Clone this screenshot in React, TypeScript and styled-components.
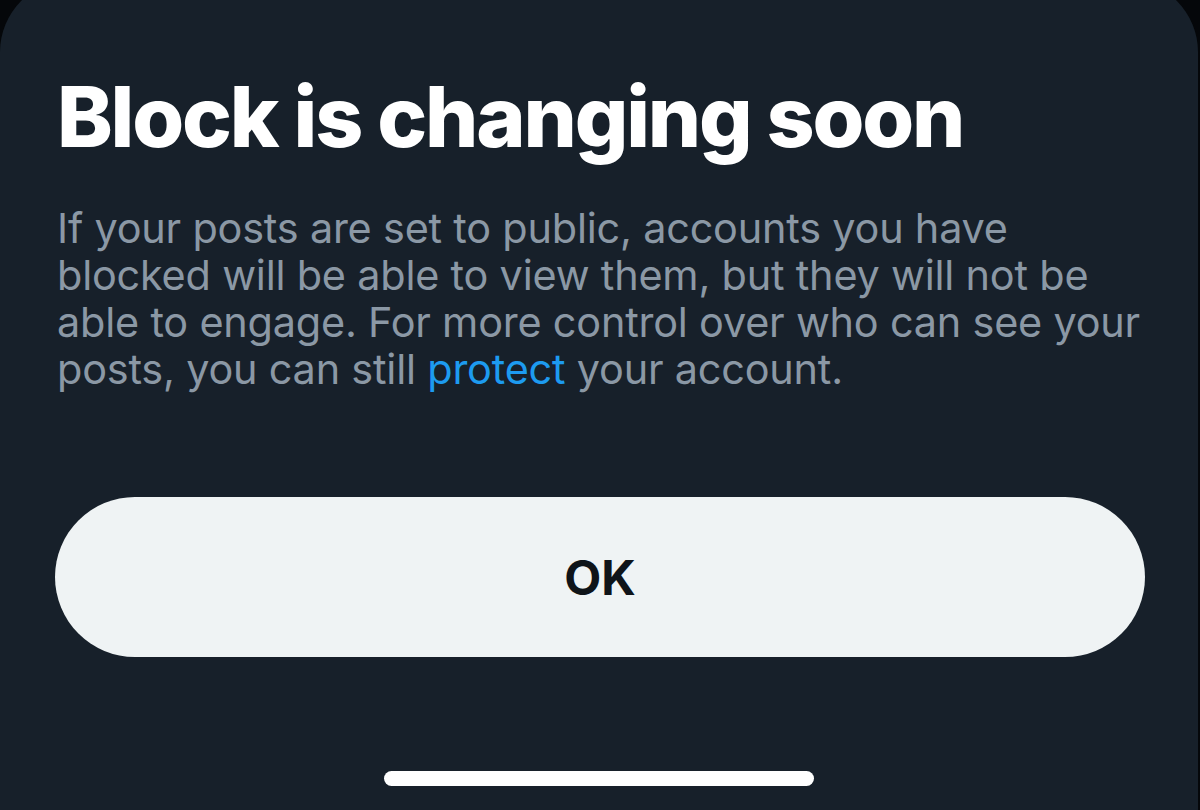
import React from 'react';
import styled, { createGlobalStyle } from 'styled-components';

const GlobalStyle = createGlobalStyle`
  html, body {
    margin: 0;
    padding: 0;
    background: #05070a;
    overflow: hidden;
  }
  * {
    box-sizing: border-box;
  }
`;

const Screen = styled.div`
  width: 1200px;
  height: 810px;
  overflow: hidden;
  background: #05070a;
`;

const Sheet = styled.div`
  display: flex;
  flex-direction: column;
  width: 1198px;
  height: 850px;
  margin-top: -20px;
  padding: 0 55px 0 57px;
  background: #17202a;
  border-radius: 72px 72px 0 0;
  font-family: Inter, 'Liberation Sans', sans-serif;
`;

const Title = styled.h1`
  margin: 86px 0 0;
  color: #ffffff;
  font-size: 84px;
  font-weight: 800;
  line-height: 102px;
  letter-spacing: -2.2px;
`;

const Body = styled.p`
  margin: 37px 0 0;
  color: #8b98a5;
  font-size: 41.4px;
  font-weight: 400;
  line-height: 47px;
  letter-spacing: -0.2px;
  white-space: nowrap;
`;

const Link = styled.span`
  color: #1d9bf0;
`;

const OkButton = styled.button`
  display: flex;
  align-items: center;
  justify-content: center;
  width: 1090px;
  height: 160px;
  margin: 104px 0 0 -2px;
  border: none;
  border-radius: 80px;
  background: #eff3f4;
  color: #0f1419;
  font-family: inherit;
  font-size: 48px;
  font-weight: 700;
  cursor: pointer;
`;

const HomeIndicator = styled.div`
  align-self: center;
  width: 430px;
  height: 15px;
  margin: 114px 0 0 -2px;
  border-radius: 8px;
  background: #ffffff;
`;

export default function App() {
  return (
    <Screen>
      <GlobalStyle />
      <Sheet>
        <Title>Block is changing soon</Title>
        <Body>
          If your posts are set to public, accounts you have
          <br />
          blocked will be able to view them, but they will not be
          <br />
          able to engage. For more control over who can see your
          <br />
          posts, you can still <Link>protect</Link> your account.
        </Body>
        <OkButton>OK</OkButton>
        <HomeIndicator />
      </Sheet>
    </Screen>
  );
}
